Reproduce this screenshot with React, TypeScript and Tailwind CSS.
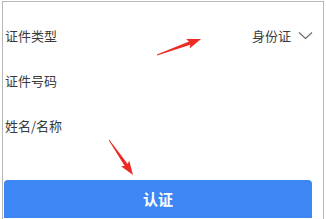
import React from 'react';

const FONT = { fontFamily: '"Noto Sans CJK SC", "Noto Sans", sans-serif' };

function Row({ label, children }: { label: string; children?: React.ReactNode }) {
  return (
    <div className="h-[45px] flex items-center justify-between pl-[2px] pr-[10px]">
      <span className="text-[13px] text-[#3a3a3a]">{label}</span>
      {children}
    </div>
  );
}

// tapered red annotation arrow, tail -> tip
function arrowPoints(tx: number, ty: number, px: number, py: number) {
  const dx = px - tx;
  const dy = py - ty;
  const len = Math.hypot(dx, dy);
  const ux = dx / len;
  const uy = dy / len;
  const nx = -uy;
  const ny = ux;
  const headLen = 12;
  const headW = 5;
  const shaftW = 1.8;
  const bx = px - ux * headLen;
  const by = py - uy * headLen;
  const pts = [
    [tx + nx * 0.4, ty + ny * 0.4],
    [bx + nx * shaftW, by + ny * shaftW],
    [bx - ux * 2 + nx * headW, by - uy * 2 + ny * headW],
    [px, py],
    [bx - ux * 2 - nx * headW, by - uy * 2 - ny * headW],
    [bx - nx * shaftW, by - ny * shaftW],
    [tx - nx * 0.4, ty - ny * 0.4],
  ];
  return pts.map((p) => p.map((v) => v.toFixed(1)).join(',')).join(' ');
}

export default function App() {
  return (
    <div className="w-[326px] h-[219px] bg-white overflow-hidden" style={FONT}>
      <div className="relative ml-[2px] mt-[1px] w-[322px] h-[218px] border-t border-l border-r border-[#b8b8b8] pt-[11px]">
        <Row label="证件类型">
          <div className="flex items-center gap-[7px]">
            <span className="text-[13px] text-[#3a3a3a]">身份证</span>
            <svg width="15" height="9" viewBox="0 0 15 9" fill="none">
              <path d="M1 1.5 L7.5 7.5 L14 1.5" stroke="#666" strokeWidth="1.1" />
            </svg>
          </div>
        </Row>
        <Row label="证件号码" />
        <Row label="姓名/名称" />

        <button className="mt-[32px] ml-[1px] w-[308px] h-[38px] rounded-t-[4px] bg-[#3d87f5] text-white text-[15px] font-bold flex items-center justify-center">
          认证
        </button>

        {/* annotation arrows */}
        <svg className="absolute left-0 top-0 pointer-events-none" width="322" height="218" viewBox="0 0 322 218">
          <polygon points={arrowPoints(154, 53, 198, 37)} fill="#ee2a24" />
          <polygon points={arrowPoints(106, 138, 130, 173)} fill="#ee2a24" />
        </svg>
      </div>
    </div>
  );
}
